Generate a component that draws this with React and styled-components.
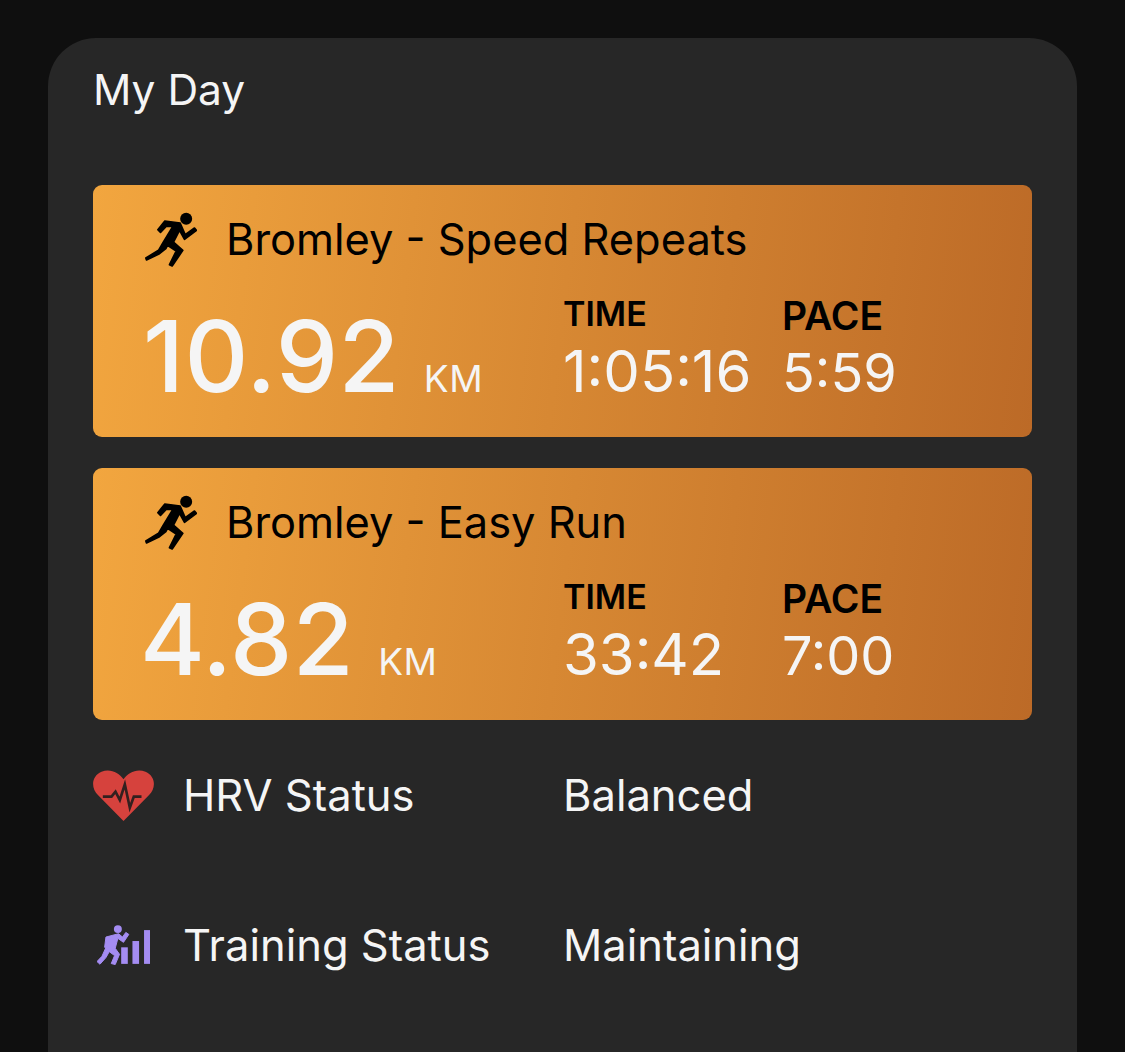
import React from "react";
import styled, { createGlobalStyle } from "styled-components";

const activities = [
  { name: "Bromley - Speed Repeats", distance: "10.92", inset: "0px", time: "1:05:16", pace: "5:59" },
  { name: "Bromley - Easy Run", distance: "4.82", inset: "-3px", time: "33:42", pace: "7:00" },
];

function RunnerIcon() {
  return (
    <RunnerSvg viewBox="45 35 155 165">
      <circle cx="168" cy="55" r="18" fill="#000" />
      <path
        d="M83 88 L104 62 L150 68 L165 103 L193 83 L199 90 L163 117 L148 90 L130 125 L158 150 L126 197 L118 193 L138 152 L112 135 L107 145 L88 160 L49 179 L47 173 L85 150 L98 128 L128 78 L108 78 L91 96 Z"
        fill="#000"
        stroke="#000"
        strokeWidth="5"
        strokeLinejoin="round"
      />
    </RunnerSvg>
  );
}

function HeartIcon() {
  return (
    <HeartSvg viewBox="23 32 182 153">
      <path
        d="M114 185 L38 108 C15 85 18 50 48 37 C75 27 100 40 114 60 C128 40 153 27 180 37 C210 50 213 85 190 108 Z"
        fill="#d6423d"
      />
      <path
        d="M52 112 H78 L90 97 L103 122 L118 75 L133 145 L145 112 H168"
        fill="none"
        stroke="#33201f"
        strokeWidth="8"
      />
    </HeartSvg>
  );
}

function TrainingIcon() {
  return (
    <TrainingSvg viewBox="35 30 160 120">
      <g fill="#a48cf2">
        <circle cx="98" cy="42" r="12" />
        <path
          d="M58 97 L62 66 L100 56 L112 66 L122 52 L131 58 L115 82 L98 70 L90 100 L103 118 L90 149 L78 146 L88 122 L72 110 L62 128 L44 148 L35 140 L50 124 L68 84 L72 74 L68 97 Z"
          stroke="#a48cf2"
          strokeWidth="3"
          strokeLinejoin="round"
        />
        <rect x="108" y="97" width="20" height="50" />
        <rect x="142" y="78" width="20" height="69" />
        <rect x="177" y="45" width="18" height="102" />
      </g>
    </TrainingSvg>
  );
}

export default function App() {
  return (
    <>
      <GlobalStyle />
      <Page>
        <Panel>
          <Heading>My Day</Heading>
          <Cards>
            {activities.map((a) => (
              <Card key={a.name}>
                <CardTitle>
                  <RunnerIcon />
                  <span>{a.name}</span>
                </CardTitle>
                <CardStats>
                  <Distance>
                    <DistanceValue $inset={a.inset}>{a.distance}</DistanceValue>
                    <DistanceUnit>KM</DistanceUnit>
                  </Distance>
                  <Stat $width="219px">
                    <StatLabel $size="34px">TIME</StatLabel>
                    <StatValue $size="58px">{a.time}</StatValue>
                  </Stat>
                  <Stat>
                    <StatLabel $size="39px">PACE</StatLabel>
                    <StatValue $size="54px">{a.pace}</StatValue>
                  </Stat>
                </CardStats>
              </Card>
            ))}
          </Cards>
          <StatusRow>
            <StatusIcon><HeartIcon /></StatusIcon>
            <StatusName>HRV Status</StatusName>
            <span>Balanced</span>
          </StatusRow>
          <StatusRow>
            <StatusIcon><TrainingIcon /></StatusIcon>
            <StatusName>Training Status</StatusName>
            <span>Maintaining</span>
          </StatusRow>
        </Panel>
      </Page>
    </>
  );
}

const GlobalStyle = createGlobalStyle`
  html, body {
    margin: 0;
    height: 100%;
    overflow: hidden;
    background: #0f0f0f;
  }
`;

const Page = styled.div`
  width: 1125px;
  height: 1052px;
  padding: 38px 48px 0;
  box-sizing: border-box;
  overflow: hidden;
  background: #0f0f0f;
  font-family: Inter, "Liberation Sans", sans-serif;
`;

const Panel = styled.div`
  height: 1100px;
  padding: 24px 45px 0;
  box-sizing: border-box;
  background: #272727;
  border-radius: 48px 48px 0 0;
  color: #f5f5f5;
`;

const Heading = styled.div`
  font-size: 42.5px;
  line-height: 56px;
`;

const Cards = styled.div`
  display: flex;
  flex-direction: column;
  gap: 31px;
  margin-top: 67px;
`;

const Card = styled.div`
  height: 252px;
  padding: 24px 50px 0;
  box-sizing: border-box;
  border-radius: 9px;
  background: linear-gradient(97deg, #f2a63f 0%, #bc6a27 100%);
`;

const CardTitle = styled.div`
  display: flex;
  align-items: center;
  gap: 29px;
  color: #000;
  font-size: 43.4px;
  line-height: 60px;
`;

const RunnerSvg = styled.svg`
  width: 52px;
  height: 55px;
  flex: none;
  margin-left: 2px;
`;

const CardStats = styled.div`
  display: flex;
  align-items: last baseline;
  margin-top: 25px;
`;

const Distance = styled.div`
  width: 420px;
  display: flex;
  align-items: baseline;
  gap: 24px;
`;

const DistanceValue = styled.span`
  margin-left: ${(p) => p.$inset};
  font-size: 99px;
  font-weight: 500;
  line-height: 102px;
  letter-spacing: 0.4px;
`;

const DistanceUnit = styled.span`
  font-size: 37px;
  letter-spacing: 0.5px;
`;

const Stat = styled.div`
  width: ${(p) => p.$width || "auto"};
`;

const StatLabel = styled.div`
  color: #000;
  font-size: ${(p) => p.$size};
  font-weight: 600;
  line-height: 40px;
  margin-bottom: 8px;
`;

const StatValue = styled.div`
  font-size: ${(p) => p.$size};
  line-height: 58px;
`;

const StatusRow = styled.div`
  display: flex;
  align-items: center;
  height: 150px;
  font-size: 43.5px;
`;

const StatusIcon = styled.div`
  width: 90px;
  flex: none;
  display: flex;
`;

const StatusName = styled.div`
  width: 380px;
  flex: none;
`;

const HeartSvg = styled.svg`
  width: 61px;
  height: 51px;
`;

const TrainingSvg = styled.svg`
  width: 53px;
  height: 40px;
  margin-left: 4px;
`;
